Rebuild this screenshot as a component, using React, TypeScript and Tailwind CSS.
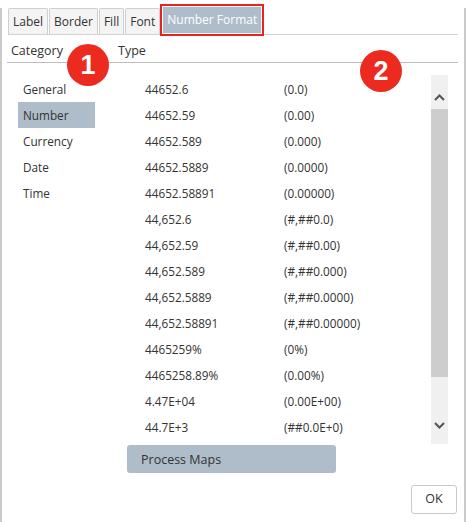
import React from 'react';

const tabs = ['Label', 'Border', 'Fill', 'Font', 'Number Format'];
const categories = ['General', 'Number', 'Currency', 'Date', 'Time'];
const types: [string, string][] = [
  ['44652.6', '(0.0)'],
  ['44652.59', '(0.00)'],
  ['44652.589', '(0.000)'],
  ['44652.5889', '(0.0000)'],
  ['44652.58891', '(0.00000)'],
  ['44,652.6', '(#,##0.0)'],
  ['44,652.59', '(#,##0.00)'],
  ['44,652.589', '(#,##0.000)'],
  ['44,652.5889', '(#,##0.0000)'],
  ['44,652.58891', '(#,##0.00000)'],
  ['4465259%', '(0%)'],
  ['4465258.89%', '(0.00%)'],
  ['4.47E+04', '(0.00E+00)'],
  ['44.7E+3', '(##0.0E+0)'],
];

function Chevron({ up }: { up?: boolean }) {
  return (
    <svg width="11" height="7" viewBox="0 0 11 7" className="mx-auto block">
      <path
        d={up ? 'M1 6 L5.5 1.5 L10 6' : 'M1 1 L5.5 5.5 L10 1'}
        fill="none"
        stroke="#555"
        strokeWidth="2"
      />
    </svg>
  );
}

function Badge({ n, className }: { n: string; className: string }) {
  return (
    <div
      className={`absolute w-[42px] h-[42px] rounded-full bg-[#ec2a1f] text-white flex items-center justify-center font-['Liberation_Sans',sans-serif] font-bold text-[27px] ${className}`}
    >
      {n}
    </div>
  );
}

export default function App() {
  const selectedTab = 'Number Format';
  const selectedCat = 'Number';

  return (
    <div className="relative w-[466px] h-[522px] bg-white border-x-2 border-b-2 border-[#cacaca] font-['Open_Sans',sans-serif] text-[11.75px] text-[#333]">
      {/* tabs */}
      <div className="ml-[6px] mt-[8px] w-[450px] flex items-end gap-px border-b border-[#d2d2d2] text-[12px]">
        {tabs.map((t) =>
          t === selectedTab ? (
            <div
              key={t}
              className="ml-[2px] h-[26px] px-[4px] leading-[26px] bg-[#aebdc9] text-white outline-2 outline-[#e8231d] outline-offset-[1px] -translate-y-[1px]"
            >
              {t}
            </div>
          ) : (
            <div
              key={t}
              className="h-[26px] px-[4px] leading-[25px] bg-[#f4f4f4] border border-b-0 border-[#cfcfcf] rounded-t-[2px]"
            >
              {t}
            </div>
          )
        )}
      </div>

      {/* headers */}
      <div className="ml-[5px] w-[451px] h-[28px] flex items-end border-b border-[#bdbdbd] text-[12.5px] pb-[1px]">
        <span className="ml-[4px] w-[107px]">Category</span>
        <span>Type</span>
      </div>

      {/* body */}
      <div className="mt-[12px] flex">
        <div className="ml-[16px] w-[77px] pt-[1px]">
          {categories.map((c) => (
            <div
              key={c}
              className={`h-[26px] leading-[26px] pl-[5px] ${c === selectedCat ? 'bg-[#aebdc9]' : ''}`}
            >
              {c}
            </div>
          ))}
        </div>
        <div className="w-[336px] pl-[50px] pt-[1px]">
          {types.map(([a, b]) => (
            <div key={a} className="h-[26px] leading-[26px] grid grid-cols-[139px_1fr]">
              <span>{a}</span>
              <span>{b}</span>
            </div>
          ))}
        </div>
        <div className="w-[17px] h-[369px] bg-[#f0f0f0] flex flex-col">
          <div className="h-[34px] pt-[19px]">
            <Chevron up />
          </div>
          <div className="h-[268px] bg-[#cdcdcd]" />
          <div className="pt-[45px]">
            <Chevron />
          </div>
        </div>
      </div>

      {/* process maps */}
      <div className="mt-[1px] ml-[125px] w-[209px] h-[28px] leading-[29px] pl-[14px] bg-[#aebdc9] rounded-[3px] text-[12.5px]">
        Process Maps
      </div>

      {/* ok */}
      <div className="mt-[12px] flex justify-end pr-[7px]">
        <button className="w-[46px] h-[29px] border border-[#c9c9c9] rounded-[3px] bg-white text-[12.5px]">
          OK
        </button>
      </div>

      <Badge n="1" className="left-[65px] top-[36px]" />
      <Badge n="2" className="left-[358px] top-[42px]" />
    </div>
  );
}
